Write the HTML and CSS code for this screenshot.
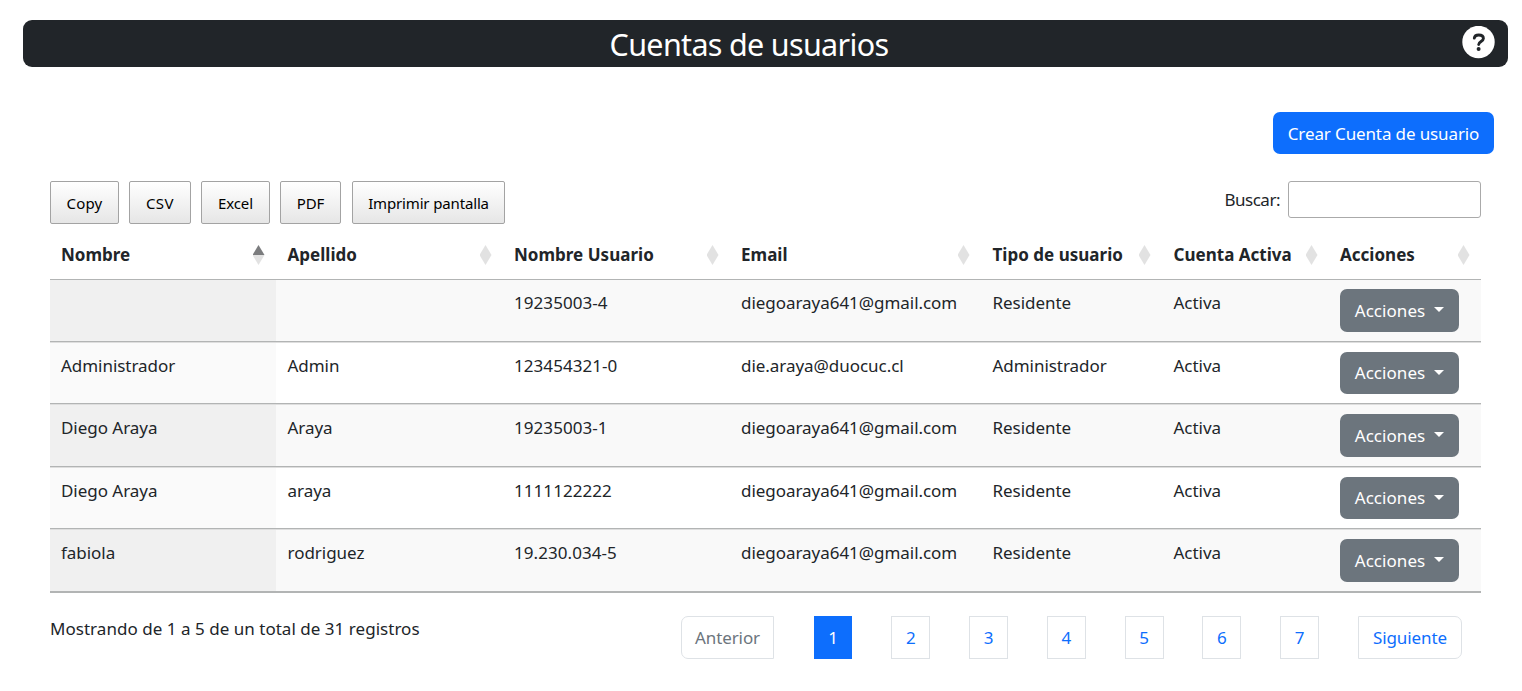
FILE: index.html
```html
<!DOCTYPE html>
<html lang="es">
<head>
<meta charset="utf-8">
<title>Cuentas de usuarios</title>
<link rel="stylesheet" href="styles.css">
</head>
<body>
<header class="titlebar">
  <h1><span>Cuentas de usuarios</span></h1>
  <svg class="help" viewBox="0 0 33 33"><circle cx="16.5" cy="16" r="16.200" fill="#fff"/><path d="M12.300 12.100C12.600 9.900 14.200 9 16.700 9c2.900 0 4.700 1.400 4.700 3.600 0 2.900-4.700 3-4.700 5.900" fill="none" stroke="#212529" stroke-width="2.900" stroke-linecap="round"/><circle cx="16.600" cy="23" r="2" fill="#212529"/></svg>
</header>
<main class="content">
  <div class="create-row"><button class="create"><span>Crear Cuenta de usuario</span></button></div>
  <div class="toolbar">
    <div class="exports">
      <button class="w-copy">Copy</button><button class="w-csv">CSV</button><button class="w-excel">Excel</button><button class="w-pdf">PDF</button><button class="w-print">Imprimir pantalla</button>
    </div>
    <label class="search"><span>Buscar:</span><input type="text"></label>
  </div>
  <table class="users">
    <colgroup><col class="c1"><col class="c2"><col class="c3"><col class="c4"><col class="c5"><col class="c6"><col class="c7"></colgroup>
    <thead><tr>
      <th><div>Nombre<i class="sort asc"></i></div></th>
      <th><div>Apellido<i class="sort"></i></div></th>
      <th><div>Nombre Usuario<i class="sort"></i></div></th>
      <th><div>Email<i class="sort"></i></div></th>
      <th><div>Tipo de usuario<i class="sort"></i></div></th>
      <th><div>Cuenta Activa<i class="sort"></i></div></th>
      <th><div>Acciones<i class="sort"></i></div></th>
    </tr></thead>
    <tbody>
      <tr><td></td><td></td><td class="num">19235003-4</td><td class="mail">diegoaraya641@gmail.com</td><td>Residente</td><td>Activa</td><td><button class="actions"><span>Acciones</span></button></td></tr>
      <tr><td>Administrador</td><td>Admin</td><td class="num">123454321-0</td><td class="mail">die.araya@duocuc.cl</td><td>Administrador</td><td>Activa</td><td><button class="actions short"><span>Acciones</span></button></td></tr>
      <tr class="tall"><td>Diego Araya</td><td>Araya</td><td class="num">19235003-1</td><td class="mail">diegoaraya641@gmail.com</td><td>Residente</td><td>Activa</td><td><button class="actions"><span>Acciones</span></button></td></tr>
      <tr><td>Diego Araya</td><td>araya</td><td class="num">1111122222</td><td class="mail">diegoaraya641@gmail.com</td><td>Residente</td><td>Activa</td><td><button class="actions short"><span>Acciones</span></button></td></tr>
      <tr class="tall"><td>fabiola</td><td>rodriguez</td><td class="num">19.230.034-5</td><td class="mail">diegoaraya641@gmail.com</td><td>Residente</td><td>Activa</td><td><button class="actions"><span>Acciones</span></button></td></tr>
    </tbody>
  </table>
  <footer class="foot">
    <div class="info">Mostrando de 1 a 5 de un total de 31 registros</div>
    <nav class="pages">
      <a class="prev">Anterior</a><a class="current">1</a><a>2</a><a>3</a><a>4</a><a>5</a><a>6</a><a>7</a><a class="next">Siguiente</a>
    </nav>
  </footer>
</main>
</body>
</html>
```
FILE: styles.css
```css
* { box-sizing: border-box; }
body { margin: 0; padding: 20px 14px 0 23px; background: #fff; color: #212529; font: 17px/27px "Noto Sans", "Open Sans", sans-serif; overflow: hidden; }
button, input { font: inherit; }
.titlebar { height: 47px; display: flex; align-items: flex-start; background: #212529; border-radius: 9px; padding: 6px 13px 0 0; color: #fff; }
h1 { flex: 1; margin: -3px -20px 0 0; padding-right: 7px; text-align: center; font-size: 30.500px; line-height: 42px; font-weight: 400; letter-spacing: -0.680px; }
.help { width: 33px; height: 33px; }
.content { padding: 45px 27px 0; }
.create-row { display: flex; justify-content: flex-end; margin-right: -13px; }
.create { width: 221px; height: 42px; padding: 0; border: 0; border-radius: 7px; background: #0d6efd; color: #fff; white-space: nowrap; letter-spacing: -0.120px; }
.toolbar { display: flex; justify-content: space-between; align-items: flex-start; margin-top: 27px; height: 49px; }
.exports { display: flex; }
.exports button { height: 43px; padding: 2px 0 0; border: 1px solid #a3a3a3; border-radius: 2px; background: linear-gradient(#fff, #e6e6e6); color: #000; font-size: 15px; letter-spacing: -0.150px; white-space: nowrap; }
.exports .w-copy { width: 69px; margin-right: 10px; letter-spacing: 0.200px; }
.exports .w-csv { width: 62px; margin-right: 10px; letter-spacing: 0.500px; }
.exports .w-excel { width: 69px; margin-right: 10px; }
.exports .w-pdf { width: 61px; margin-right: 11px; }
.exports .w-print { width: 153px; }
.search { display: flex; align-items: center; gap: 8px; }
.search span { letter-spacing: -0.500px; }
.search input { width: 193px; height: 37px; border: 1px solid #aaa; border-radius: 3px; background: transparent; }
.users { width: 1431px; table-layout: fixed; border-collapse: separate; border-spacing: 0; border-bottom: 1px solid #b2b4b4; }
.c1 { width: 226px; } .c2 { width: 227px; } .c3 { width: 227px; } .c4 { width: 251px; }
.c5 { width: 181px; } .c6 { width: 167px; } .c7 { width: 152px; }
th { height: 50px; padding: 0 11px 1px; border-bottom: 1px solid #b2b4b4; text-align: left; font-weight: 700; white-space: nowrap; letter-spacing: 0.020px; }
th div { display: flex; align-items: center; justify-content: space-between; }
.sort { width: 12px; height: 20px; margin: 2px 0.500px 0 0; background: #e2e2e2; clip-path: polygon(50% 0, 100% 50%, 50% 100%, 0 50%); }
.asc { background: linear-gradient(#7b7c7e 0 50%, #e2e2e2 50%); }
td { height: 62px; padding: 9px 11px 0; border-top: 1px solid #dedede; border-bottom: 1px solid #b2b4b4; vertical-align: top; line-height: 27px; white-space: nowrap; letter-spacing: -0.040px; }
.tall td { height: 63px; }
td.num { letter-spacing: 0.060px; }
tbody tr:first-child td { border-top-color: #f9f9f9; padding-top: 8px; }
tbody tr:nth-child(odd) td { background: #f9f9f9; }
tbody tr td:first-child { background: #fafafa; }
tbody tr:nth-child(odd) td:first-child { background: #f0f0f0; }
tbody tr:first-child td:first-child { border-top-color: #f0f0f0; }
td:nth-child(2), td:nth-child(5), td:nth-child(6), th:nth-child(2), th:nth-child(5), th:nth-child(6) { padding-left: 11.500px; }
.actions { width: 119px; height: 43px; display: flex; align-items: center; justify-content: center; gap: 9px; padding: 0; border: 0; border-radius: 7px; background: #6c757d; color: #fff; letter-spacing: 0.050px; }
.actions.short { height: 42px; padding-bottom: 1px; }
.actions::after { content: ""; border: 5px solid transparent; border-top-color: #fff; border-bottom: 0; margin-top: -3px; }
.actions.short::after { margin-top: -1px; }
.foot { display: flex; justify-content: space-between; margin-top: 23px; padding-right: 19px; }
.info { margin-top: -1px; letter-spacing: 0.030px; }
.pages { width: 781px; display: flex; justify-content: space-between; }
.pages a { width: 39px; height: 43px; border: 1px solid #dee2e6; color: #0d6efd; text-align: center; line-height: 42px; }
.pages .prev { width: 93px; margin-right: 1.200px; border-radius: 7px 0 0 7px; color: #6c757d; letter-spacing: -0.100px; }
.pages .next { width: 104px; border-radius: 0 7px 7px 0; letter-spacing: -0.100px; }
.pages .current { width: 38.500px; background: #0d6efd; border-color: #0d6efd; color: #fff; }
```
